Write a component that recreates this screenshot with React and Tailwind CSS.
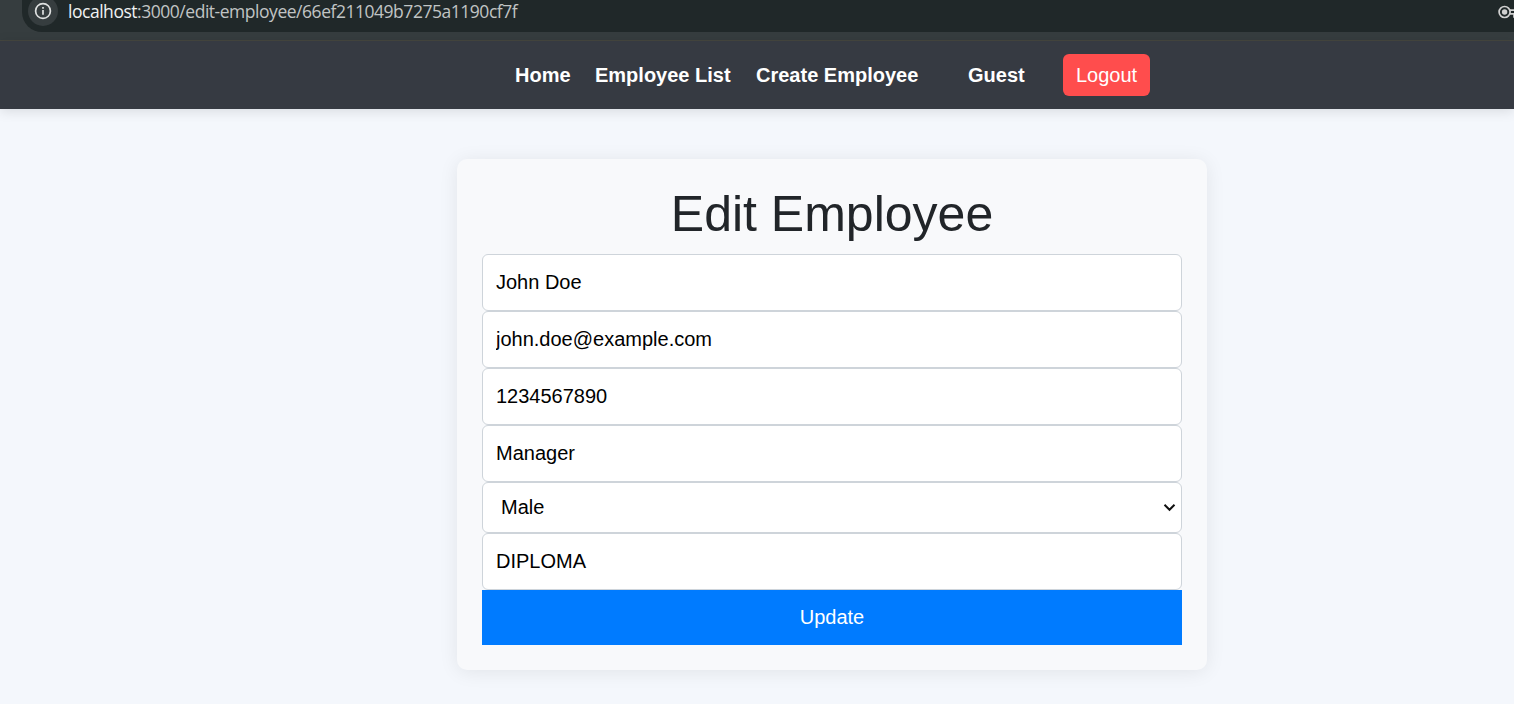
const links = [
  { label: 'Home', cls: 'w-[55px]' },
  { label: 'Employee List', cls: 'w-[136px]' },
  { label: 'Create Employee', cls: 'w-[162px]' },
];

function InfoIcon() {
  return (
    <svg width="18" height="18" viewBox="0 0 18 18" fill="none" stroke="#dfe1e1" strokeWidth="1.7">
      <circle cx="9" cy="9" r="7.4" />
      <path d="M9 8v4.8M9 5v1.8" />
    </svg>
  );
}

function KeyIcon() {
  return (
    <svg width="24" height="14" viewBox="0 0 24 14" fill="none" stroke="#d0d0d0" strokeWidth="1.7" className="shrink-0">
      <circle cx="6.6" cy="7" r="5.5" />
      <circle cx="6.6" cy="7" r="2.7" fill="#d0d0d0" stroke="none" />
      <path d="M11.8 5.2H23v3.6h-3v3h-4v-3h-4.2" />
    </svg>
  );
}

function BrowserBar() {
  return (
    <div className="h-[41px] shrink-0 overflow-hidden border-b border-[#45463f] bg-[#363d3f] pl-[22px]">
      <div className="flex h-8 rounded-bl-[20px] bg-[#202829]">
        <div className="-mt-[4px] ml-[6px] flex h-[30px] w-[30px] items-center justify-center rounded-full bg-[#363d3f]">
          <InfoIcon />
        </div>
        <div className="ml-[10px] -mt-px h-6 whitespace-nowrap font-['Open_Sans',sans-serif] text-[17.5px] leading-6 tracking-[-0.47px] text-[#c0c4c4]">
          <span className="text-[#f0f2f2]">localhost</span>:3000/edit-employee/66ef211049b7275a1190cf7f
        </div>
        <div className="-mr-[8px] ml-auto mt-[5px]">
          <KeyIcon />
        </div>
      </div>
    </div>
  );
}

function Nav() {
  return (
    <nav className="flex h-[68px] shrink-0 items-center bg-[#363a42] pl-[515px] text-[20px] font-bold leading-[30px] text-white shadow-[0_2px_12px_rgba(0,0,0,0.12)]">
      <div className="flex gap-[25px]">
        {links.map((l) => (
          <a key={l.label} className={`whitespace-nowrap ${l.cls}`}>{l.label}</a>
        ))}
      </div>
      <span className="ml-[50px] w-[57px]">Guest</span>
      <button className="ml-[38px] h-[42px] w-[87px] rounded-[6px] bg-[#ff4d4d] font-normal">Logout</button>
    </nav>
  );
}

const field = 'block w-full rounded-[6px] border border-[#ced4da] bg-white text-black outline-none';

function Input({ value }) {
  return <input className={`${field} h-[57px] px-[13px]`} defaultValue={value} />;
}

export default function App() {
  return (
    <div className="flex h-[704px] w-[1514px] flex-col overflow-hidden bg-[#f4f7fc] font-['Liberation_Sans',sans-serif] text-[20px]">
      <BrowserBar />
      <Nav />
      <main className="pl-[457px] pt-[50px]">
        <form className="h-[511px] w-[750px] rounded-[10px] bg-[#f8f9fb] px-[25px] pt-[25px] shadow-[0_2px_19px_rgba(0,0,0,0.08)]">
          <h2 className="mb-[10px] text-center text-[50px] leading-[60px] text-[#212529]">Edit Employee</h2>
          <Input value="John Doe" />
          <Input value="john.doe@example.com" />
          <Input value="1234567890" />
          <Input value="Manager" />
          <div className={`${field} flex h-[51px] items-center justify-between pb-px pl-[18px] pr-[5px]`}>
            <span>Male</span>
            <svg width="13" height="9" viewBox="0 0 13 9" fill="none" stroke="#101010" strokeWidth="2">
              <path d="M1.5 1.8 6.5 6.8 11.5 1.8" />
            </svg>
          </div>
          <Input value="DIPLOMA" />
          <button type="button" className="block h-[55px] w-full bg-[#007bff] pb-[2px] text-white">Update</button>
        </form>
      </main>
    </div>
  );
}
